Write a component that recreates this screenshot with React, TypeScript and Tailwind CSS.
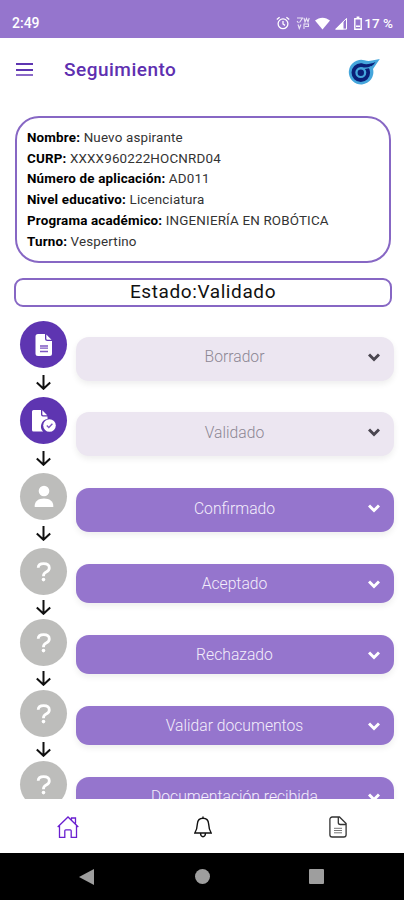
import { useState } from "react";

type StepState = "done" | "next" | "pending";

interface Step {
  label: string;
  icon: "file" | "fileCheck" | "user" | "question";
  state: StepState;
}

const STEPS: Step[] = [
  { label: "Borrador", icon: "file", state: "done" },
  { label: "Validado", icon: "fileCheck", state: "done" },
  { label: "Confirmado", icon: "user", state: "next" },
  { label: "Aceptado", icon: "question", state: "pending" },
  { label: "Rechazado", icon: "question", state: "pending" },
  { label: "Validar documentos", icon: "question", state: "pending" },
  { label: "Documentación recibida", icon: "question", state: "pending" },
];

const DETAILS = [
  { name: "Nombre:", value: "Nuevo aspirante" },
  { name: "CURP:", value: "XXXX960222HOCNRD04" },
  { name: "Número de aplicación:", value: "AD011" },
  { name: "Nivel educativo:", value: "Licenciatura" },
  { name: "Programa académico:", value: "INGENIERÍA EN ROBÓTICA" },
  { name: "Turno:", value: "Vespertino" },
];

function StepIcon({ icon }: { icon: Step["icon"] }) {
  if (icon === "file") {
    return (
      <svg width="47" height="47" viewBox="0 0 47 47">
        <path d="M18 13h7v4.500a2.500 2.500 0 0 0 2.500 2.500H32v12.500a2.500 2.500 0 0 1-2.500 2.500H18a2.500 2.500 0 0 1-2.500-2.500v-17A2.500 2.500 0 0 1 18 13z" fill="#fff" />
        <path d="M26.300 13.500l5.200 5.200h-4.200a1 1 0 0 1-1-1z" fill="#fff" />
        <path d="M20 25h8M20 27.200h8M20 30.500h8" stroke="#7e57c2" strokeWidth="1.300" />
      </svg>
    );
  }
  if (icon === "fileCheck") {
    return (
      <svg width="47" height="47" viewBox="0 0 47 47">
        <path d="M13.500 13H21v4.500a2 2 0 0 0 2 2h4.500v2.600a7.300 7.300 0 0 0-4.400 12.400h-9.600a1.500 1.500 0 0 1-1.500-1.500V14.500a1.500 1.500 0 0 1 1.500-1.500z" fill="#fff" />
        <path d="M22.300 13.300l4.900 4.900h-3.900a1 1 0 0 1-1-1z" fill="#fff" />
        <circle cx="29.500" cy="28.500" r="6.300" fill="#fff" />
        <path d="M26.800 28.600l2 1.900 3.600-3.700" stroke="#7e57c2" strokeWidth="1.400" fill="none" />
      </svg>
    );
  }
  if (icon === "user") {
    return (
      <svg width="47" height="47" viewBox="0 0 47 47" fill="#fff">
        <circle cx="24" cy="18" r="5.300" />
        <path d="M14.700 34v-1.200c0-4.500 3.800-7.300 9.300-7.300s9.300 2.800 9.300 7.300V34z" />
      </svg>
    );
  }
  return (
    <svg width="47" height="47" viewBox="0 0 47 47" fill="none" stroke="#fff" strokeWidth="2.800">
      <path d="M18.200 19.800c.1-2.700 2.300-4.100 5.400-4.100 3.500 0 5.700 1.600 5.700 4.200 0 2.200-1.300 3.200-3.100 4.100-1.900 1-2.700 1.700-2.700 3.700v.5" />
      <circle cx="23.500" cy="31.600" r="1.800" fill="#fff" stroke="none" />
    </svg>
  );
}

function StatusBar() {
  return (
    <div className="flex h-[38px] shrink-0 items-end bg-[#9575cd] pb-[7px] pl-3 pr-[11px] text-white">
      <span className="text-[14px] font-medium leading-4">2:49</span>
      <div className="ml-auto flex items-center text-[13.500px] font-medium leading-4">
        <svg className="mr-1.5" width="14" height="14" viewBox="0 0 14 14" fill="none" stroke="#fff" strokeWidth="1.300">
          <circle cx="7" cy="7.800" r="4.900" />
          <path d="M7 5v3l2 1.400M.8 3.600l2.800-2.400M13.200 3.600l-2.800-2.400" />
        </svg>
        <svg className="mr-[5px]" width="14" height="14" viewBox="0 0 14 14" fill="none" stroke="#fff" strokeWidth="1.100" opacity=".8">
          <path d="M1 2h5.500L3.500 6.500M1 5l1.500 2M8 2l1 4 1.500-3.500L12 6l1.200-4M2 8.500l1.300 4L5 8.500M8 13V8h4.500v2.500H9" />
        </svg>
        <svg className="mr-[5px]" width="15" height="13" viewBox="0 0 15 13" fill="#fff">
          <path d="M0 3.600C4.400-.3 10.600-.3 15 3.600L7.500 12.500z" />
        </svg>
        <svg className="mr-[7px]" width="12" height="13" viewBox="0 0 12 13">
          <path d="M0 12.500l8.500-8.500v8.500z" fill="#fff" />
          <path d="M.8 12.100L11.500 1.400v10.700z" fill="none" stroke="#fff" strokeWidth="1" />
        </svg>
        <svg className="mr-0.5" width="8" height="14" viewBox="0 0 8 14">
          <path d="M.8 2.700h6.400v10.500H.8z" fill="none" stroke="#fff" strokeWidth="1.400" />
          <path d="M2.600.5h2.800v2H2.600zM2 9.500h4v1.500H2z" fill="#fff" />
        </svg>
        <span>17 %</span>
      </div>
    </div>
  );
}

function Header() {
  return (
    <header className="flex h-[78px] shrink-0 items-start pl-[15.500px] pr-6">
      <button className="mt-[25px] flex h-[13px] w-[17.500px] flex-col justify-between">
        <span className="h-0.5 w-full bg-[#5e35b1]" />
        <span className="h-0.5 w-full bg-[#5e35b1]" />
        <span className="h-0.5 w-full bg-[#8a68c8]" />
      </button>
      <h1 className="ml-[31px] mt-[18px] text-[19px] font-medium leading-7 tracking-[0.5px] text-[#5e2fb0]">
        Seguimiento
      </h1>
      <svg className="ml-auto mt-5" width="32" height="28" viewBox="0 0 32 28">
        <path d="M31.800 1L25 11a12.300 12.300 0 1 1-8.500-8.700c2.500.7 5 .8 7.500.2z" fill="#45a6dc" />
        <circle cx="12.800" cy="14.600" r="7.400" fill="none" stroke="#0b1f78" strokeWidth="3.800" />
        <path d="M12.500 5.300c5 1.500 10 1 15-1.300-2.300 3.600-5.500 5.800-9.500 6z" fill="#0b1f78" />
        <path d="M13 9.800c4 .8 7.500.6 10.500-1.300" fill="none" stroke="#45a6dc" strokeWidth="1.300" />
        <circle cx="12.800" cy="14.800" r="3.200" fill="#0b1f78" />
      </svg>
    </header>
  );
}

function StepRow({ step, open, onToggle }: { step: Step; open: boolean; onToggle: () => void }) {
  const done = step.state === "done";
  return (
    <div className={`flex shrink-0 ${step.state === "pending" ? "h-[71px]" : "h-[75.800px]"}`}>
      <div className="flex w-[47px] flex-col items-center">
        <div className={`h-[47px] w-[47px] shrink-0 rounded-full ${done ? "bg-[#5e35b1]" : "bg-[#bdbdbb]"}`}>
          <StepIcon icon={step.icon} />
        </div>
        <div className="flex flex-1 items-center">
          <svg width="15" height="15" viewBox="0 0 15 15" fill="none" stroke="#111" strokeWidth="2">
            <path d="M7.500 0v14M.8 7.500l6.700 6.300 6.700-6.300" />
          </svg>
        </div>
      </div>
      <button
        onClick={onToggle}
        className={`ml-[9px] mt-[15.500px] flex w-[317.500px] items-start rounded-[13px] pl-[25px] pr-[13.500px] pt-[8.500px] shadow-[0_3px_6px_rgba(0,0,0,0.07)] ${
          step.state === "pending" ? "h-[39px]" : "h-[44px]"
        } ${done ? "bg-[#ece6f1] text-[#8d8794]" : "bg-[#9575cd] text-[#f3edfb]"}`}
      >
        <span className="flex-1 text-center text-[15.700px] font-light leading-6">{step.label}</span>
        <svg
          className={`mt-[7.500px] ${open ? "rotate-180" : ""}`}
          width="12" height="9" viewBox="0 0 12 9" fill="none"
          stroke={done ? "#4a4650" : "#fff"} strokeWidth="3"
        >
          <path d="M1 1.500l5 5 5-5" />
        </svg>
      </button>
    </div>
  );
}

function TabBar() {
  return (
    <nav className="grid h-[54px] shrink-0 grid-cols-[repeat(3,135px)] items-center justify-items-center bg-white pb-px pt-0.5">
      <svg width="22" height="22" viewBox="0 0 22 22" fill="none" stroke="#6a1fd0" strokeWidth="1.300">
        <path d="M.7 11L11 1l10.300 10M2.500 9.500v11.800h5.300v-6.500a1 1 0 0 1 1-1h4.400a1 1 0 0 1 1 1v6.500h5.300V9.500M14.500 3.500V2h4v5.500" />
      </svg>
      <svg width="18" height="22" viewBox="0 0 18 22" fill="none" stroke="#111" strokeWidth="1.400">
        <path d="M9 2.200c-3.300 0-5.400 2.400-5.600 5.600-.2 4.200-.9 6.500-2.600 9.200h16.400c-1.700-2.700-2.400-5-2.600-9.200C14.400 4.600 12.300 2.200 9 2.200zM9 .4v1.800M6.500 17.500c.2 1.900 1 3.200 2.500 3.200s2.300-1.300 2.500-3.200" />
      </svg>
      <svg width="18" height="22" viewBox="0 0 18 22" fill="none" stroke="#333" strokeWidth="1.300">
        <path d="M10.500 1H3.200A2.300 2.300 0 0 0 .9 3.300v15.400A2.300 2.300 0 0 0 3.200 21h11.600a2.300 2.300 0 0 0 2.300-2.300V7.500zM9.300 1v5.500a2 2 0 0 0 2 2h5.800" />
        <path d="M5 12.300h8M5 14.500h8M5 16.800h8" stroke="#777" strokeWidth="1" />
      </svg>
    </nav>
  );
}

function SystemNav() {
  return (
    <div className="flex h-[47px] shrink-0 items-center bg-black pl-[79px]">
      <svg width="15" height="16" viewBox="0 0 15 16" fill="#9e9e9e">
        <path d="M15 0v16L0 8z" />
      </svg>
      <div className="ml-[101px] h-[15px] w-[15px] rounded-full bg-[#9e9e9e]" />
      <div className="ml-[99px] h-[15px] w-[15px] rounded-[1px] bg-[#9e9e9e]" />
    </div>
  );
}

export default function App() {
  const [openStep, setOpenStep] = useState<string | null>(null);

  return (
    <div className="flex h-[900px] w-[404px] flex-col overflow-hidden bg-white font-['Roboto',sans-serif]">
      <StatusBar />
      <Header />

      {/* Applicant details */}
      <section className="ml-[15px] h-[147px] w-[376px] shrink-0 rounded-[24px] border-2 border-[#8767c4] pl-2.5 pt-2.5 text-[13.400px] leading-[20.700px] tracking-[0.170px] text-[#333]">
        {DETAILS.map(({ name, value }) => (
          <p key={name} className="whitespace-nowrap">
            <b className="font-bold text-black">{name}</b> {value}
          </p>
        ))}
      </section>

      <div className="ml-3.5 mt-[15px] flex h-[29px] w-[378px] shrink-0 items-center justify-center rounded-[9px] border-2 border-[#8767c4] text-[19px] tracking-[0.600px] text-[#111]">
        Estado:Validado
      </div>

      {/* Progress */}
      <main className="mt-[14px] flex min-h-0 flex-1 flex-col overflow-hidden pl-5">
        {STEPS.map((step) => (
          <StepRow
            key={step.label}
            step={step}
            open={openStep === step.label}
            onToggle={() => setOpenStep(openStep === step.label ? null : step.label)}
          />
        ))}
      </main>

      <TabBar />
      <SystemNav />
    </div>
  );
}
